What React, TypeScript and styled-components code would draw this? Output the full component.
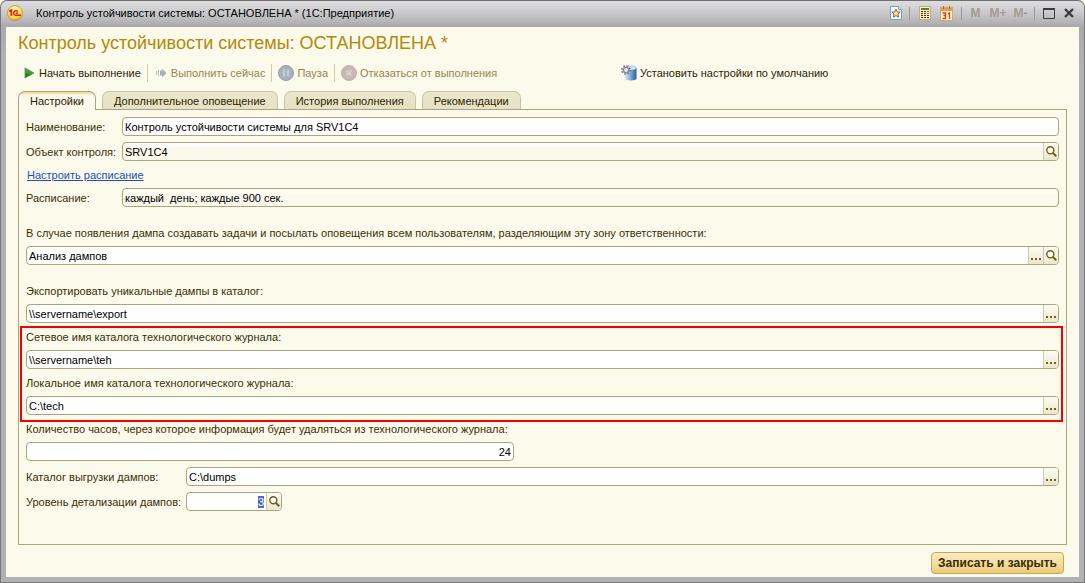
import React, { useEffect, useRef } from 'react';
import styled, { createGlobalStyle, css } from 'styled-components';

const Global = createGlobalStyle`
  *, *::before, *::after { box-sizing: border-box; }
  body { margin: 0; background: #fcfaeb; }
  body, button, input { font-family: "Liberation Sans", Arial, sans-serif; font-size: 11px; }
  button { margin: 0; padding: 0; border: 0; background: none; color: inherit; white-space: nowrap; }
`;

const Window = styled.div`
  display: flex;
  flex-direction: column;
  min-height: 100vh;
  padding: 0 5px 5px;
  border: 1px solid #77777b;
  border-top-color: #6e6e72;
  border-radius: 7px 7px 0 0;
  background: linear-gradient(#dededf 0, #c9c9cb 12px, #a9a9ad 26px, #b2b2b4 60px, #b2b2b4);
`;

const TitleBar = styled.header`
  display: flex;
  align-items: center;
  height: 26px;
  flex: none;
  padding: 0 0 2px 1px;
`;

const Caption = styled.div`
  flex: 1;
  margin-left: 13px;
  color: #000;
  white-space: nowrap;
`;

const TitleTools = styled.div`
  display: flex;
  align-items: center;
`;

const TitleButton = styled.button<{ $w: number; $muted?: boolean }>`
  display: flex;
  align-items: center;
  justify-content: center;
  width: ${(p) => p.$w}px;
  height: 18px;
  font-size: 12px;
  font-weight: bold;
  color: ${(p) => (p.$muted ? '#a39b95' : '#3c3c3e')};
`;

const TitleSeparator = styled.span`
  width: 1px;
  height: 13px;
  margin: 0 4px;
  background: #98989c;
`;

const Body = styled.main`
  display: flex;
  flex: 1;
  flex-direction: column;
  padding: 5px 12px 3px;
  background: #fcfaeb;
  color: #3a2f08;
`;

const Heading = styled.h1`
  margin: 0;
  font-size: 18px;
  font-weight: normal;
  line-height: 22px;
  color: #b08a0c;
  white-space: nowrap;
`;

const Toolbar = styled.div`
  display: flex;
  align-items: center;
  height: 22px;
  margin-top: 8px;
`;

const ToolGroup = styled.div`
  display: flex;
  align-items: center;
  flex: 0 0 597px;
`;

const ToolButton = styled.button<{ $gap?: number }>`
  display: flex;
  align-items: center;
  gap: ${(p) => p.$gap ?? 4}px;
  height: 20px;
  padding: 0 6px;
  color: #2c2304;
  &:disabled { color: #978552; }
`;

const ToolSeparator = styled.span`
  width: 1px;
  height: 18px;
  background: #cfcaa8;
`;

const Tabs = styled.div`
  display: flex;
  gap: 6px;
  height: 19px;
  margin-top: 7px;
`;

const Tab = styled.button<{ $active?: boolean }>`
  position: relative;
  height: 18px;
  padding: 0 11px;
  border: 1px solid #c9c4a0;
  border-bottom: 0;
  border-radius: 7px 7px 0 0;
  background: linear-gradient(#ebe7cc, #e6e1c3);
  color: #2c2304;
  ${(p) =>
    p.$active &&
    css`
      height: 19px;
      z-index: 1;
      border-color: #aaa57c;
      background: linear-gradient(#f3d588 0, #f9e9bd 2px, #fcfaeb 3px);
    `}
`;

const Panel = styled.section`
  display: flex;
  flex: 1;
  flex-direction: column;
  gap: 6px;
  margin-top: -1px;
  padding: 7px;
  border: 1px solid #aaa57c;
`;

const FormRow = styled.div<{ $label: number }>`
  display: grid;
  grid-template-columns: ${(p) => p.$label}px 1fr;
  align-items: center;
`;

const Stack = styled.div<{ $spaced?: boolean }>`
  display: flex;
  flex-direction: column;
  gap: 6px;
  margin-top: ${(p) => (p.$spaced ? 12 : 0)}px;
`;

const Highlight = styled.div`
  position: relative;
  display: flex;
  flex-direction: column;
  gap: 6px;
  &::after {
    content: '';
    position: absolute;
    inset: -3px -4px -7px -6px;
    border: 2px solid #f80000;
    pointer-events: none;
  }
`;

const Label = styled.label`
  padding-top: 2px;
  line-height: 13px;
  white-space: nowrap;
`;

const ScheduleLink = styled.a`
  align-self: flex-start;
  margin-left: 1px;
  padding-top: 2px;
  line-height: 13px;
  color: #1a4fc4;
`;

const Field = styled.div<{ $readOnly?: boolean; $width?: string }>`
  display: flex;
  width: ${(p) => p.$width ?? '100%'};
  height: 19px;
  overflow: hidden;
  border: 1px solid #aaa57c;
  border-radius: 4px;
  background: ${(p) => (p.$readOnly ? 'linear-gradient(#fff, #fbf9ec 6px)' : '#fff')};
`;

const Input = styled.input<{ $right?: boolean }>`
  flex: 1;
  min-width: 0;
  height: 17px;
  padding: 0 2px;
  border: 0;
  outline: 0;
  background: transparent;
  color: #000;
  text-align: ${(p) => (p.$right ? 'right' : 'left')};
  &::selection { background: #5168c4; color: #fff; }
`;

const FieldButton = styled.button`
  display: flex;
  align-items: center;
  justify-content: center;
  flex: none;
  width: 15px;
  border-left: 1px solid #cfcba9;
  background: linear-gradient(#fdfcf3, #ebe7cc);
`;

const Footer = styled.footer`
  display: flex;
  justify-content: flex-end;
  padding: 7px 3px 0;
`;

const SaveButton = styled.button`
  height: 22px;
  padding: 0 6px;
  border: 1px solid #c9a650;
  border-radius: 4px;
  background: linear-gradient(#fbedc4, #f4dc9c 55%, #ecca7c);
  color: #3a2c00;
  font-size: 12px;
  font-weight: bold;
`;

const LogoIcon = () => (
  <svg width="16" height="16" viewBox="0 0 16 16" aria-hidden="true">
    <defs>
      <radialGradient id="logo" cx="45%" cy="30%" r="70%">
        <stop offset="0" stopColor="#fffbc0" />
        <stop offset="0.7" stopColor="#fbe04e" />
        <stop offset="1" stopColor="#e0a322" />
      </radialGradient>
    </defs>
    <circle cx="8" cy="8" r="7.5" fill="url(#logo)" stroke="#c98d2a" strokeWidth="0.8" />
    <path d="M2.2 6.4 4.4 5.2V11" fill="none" stroke="#d8231a" strokeWidth="1.8" />
    <path d="M10.8 6.6A2.3 2.3 0 1 0 8.8 10.3H14M11 8.3H8.8" fill="none" stroke="#d8231a" strokeWidth="1.5" />
  </svg>
);

const StarIcon = () => (
  <svg width="12" height="14" viewBox="0 0 12 14" aria-hidden="true">
    <path d="M.5.5h8.2l2.8 2.8v10.2H.5z" fill="#f4f9fd" stroke="#7f9db4" />
    <path d="M8.5.5v3h3" fill="#cfe0ec" stroke="#7f9db4" />
    <path d="m6 3.2 1.2 2.6 2.9.3-2.1 2 .5 2.9L6 9.6 3.5 11l.5-2.9-2.1-2 2.9-.3z" fill="#f7df94" stroke="#6d5c2c" strokeWidth="0.9" />
  </svg>
);

const CalculatorIcon = () => (
  <svg width="12" height="14" viewBox="0 0 12 14" aria-hidden="true">
    <rect x="0.5" y="0.5" width="11" height="13" fill="#fbedc0" stroke="#cfa873" />
    <rect x="2" y="2" width="8" height="2" fill="#3f8a2a" />
    <path d="M2 5.5h8M2 7.5h8M2 9.5h8M2 11.5h8" stroke="#4d3311" strokeDasharray="2 1" />
    <path d="M8 5.500h2M8 7.500h2" stroke="#cc3e24" />
  </svg>
);

const CalendarIcon = () => (
  <svg width="13" height="15" viewBox="0 0 13 15" aria-hidden="true">
    <rect x="0.5" y="1.5" width="12" height="13" fill="#fdf3d2" stroke="#cfa873" />
    <path d="M1 2h11v3H1z" fill="#ee9a4e" />
    <path d="M3.5 0v3M9.5 0v3" stroke="#b5672c" />
    <path d="M2.5 7h3v5.5h-3M3.5 9.5h2M8 8l1.5-1v6" fill="none" stroke="#e03c12" strokeWidth="1.3" />
  </svg>
);

const MaximizeIcon = () => (
  <svg width="12" height="11" viewBox="0 0 12 11" aria-hidden="true">
    <path d="M.5 1v9.5h11V1" fill="none" stroke="#3c3c3e" />
    <path d="M0 1h12" stroke="#3c3c3e" strokeWidth="2" />
  </svg>
);

const CloseIcon = () => (
  <svg width="10" height="10" viewBox="0 0 10 10" aria-hidden="true">
    <path d="m1 1 8 8M9 1 1 9" stroke="#3c3c3e" strokeWidth="2.4" />
  </svg>
);

const PlayIcon = () => (
  <svg width="11" height="12" viewBox="0 0 11 12" aria-hidden="true">
    <path d="M1 1 10 6 1 11z" fill="#3da52f" stroke="#64806a" strokeWidth="0.8" />
    <path d="M1.5 6.5H8l-6.500 3.700z" fill="#228418" />
  </svg>
);

const RunNowIcon = () => (
  <svg width="13" height="10" viewBox="-2 0 13 10" aria-hidden="true">
    <path d="M.5 3v4M2.500 2v6" stroke="#b4bfc6" />
    <path d="M4 2.500h2V.6L10.500 5 6 9.400V7.500H4z" fill="#a3b2bf" />
  </svg>
);

const PauseIcon = () => (
  <svg width="16" height="16" viewBox="0 0 16 16" aria-hidden="true">
    <circle cx="8" cy="8" r="7.5" fill="#a5b1bc" stroke="#93a0ac" />
    <path d="M6 4.5v7M10 4.5v7" stroke="#c4cdd4" strokeWidth="2.2" />
  </svg>
);

const CancelIcon = () => (
  <svg width="16" height="16" viewBox="0 0 16 16" aria-hidden="true">
    <circle cx="8" cy="8" r="7.5" fill="#c9b8b3" stroke="#bfaeaa" />
    <path d="m5.5 5.5 5 5M10.5 5.5l-5 5" stroke="#dccfca" strokeWidth="2" />
  </svg>
);

const DatabaseGearIcon = () => (
  <svg width="16" height="16" viewBox="0 0 16 16" aria-hidden="true">
    <defs>
      <linearGradient id="drum">
        <stop offset="0" stopColor="#d8ebf6" />
        <stop offset="0.45" stopColor="#7fb2d6" />
        <stop offset="1" stopColor="#235f9c" />
      </linearGradient>
    </defs>
    <path d="M4 3v10.5c0 2.600 11.500 2.600 11.500 0V3z" fill="url(#drum)" />
    <ellipse cx="9.75" cy="3" rx="5.7" ry="2" fill="#d3e6f2" stroke="#7ba6c6" strokeWidth="0.6" />
    <circle cx="5" cy="5" r="4" fill="none" stroke="#777a8e" strokeWidth="1.8" strokeDasharray="1.6 1.54" />
    <circle cx="5" cy="5" r="2.6" fill="#e6e8ee" stroke="#8a8ca0" strokeWidth="1.4" />
  </svg>
);

const SearchIcon = () => (
  <svg width="11" height="11" viewBox="0 0 11 11" aria-hidden="true">
    <circle cx="4.3" cy="4.3" r="3.5" fill="#fffef6" stroke="#70601c" strokeWidth="1.4" />
    <path d="m7 7 3.2 3.2" stroke="#70601c" strokeWidth="2" />
  </svg>
);

const DotsIcon = () => (
  <svg width="10" height="11" viewBox="0 0 10 11" aria-hidden="true">
    <path d="M0 8h2v2H0zM4 8h2v2H4zM8 8h2v2H8z" fill="#70601c" />
  </svg>
);

const Choose = () => (
  <FieldButton type="button" aria-label="Выбрать">
    <DotsIcon />
  </FieldButton>
);

const Open = () => (
  <FieldButton type="button" aria-label="Открыть">
    <SearchIcon />
  </FieldButton>
);

export default function App() {
  const level = useRef<HTMLInputElement>(null);
  useEffect(() => {
    level.current?.focus();
    level.current?.select();
  }, []);

  return (
    <>
      <Global />
      <Window>
        <TitleBar>
          <LogoIcon />
          <Caption>Контроль устойчивости системы: ОСТАНОВЛЕНА * (1С:Предприятие)</Caption>
          <TitleTools>
            <TitleButton $w={18} aria-label="Избранное"><StarIcon /></TitleButton>
            <TitleSeparator />
            <TitleButton $w={22} aria-label="Калькулятор"><CalculatorIcon /></TitleButton>
            <TitleButton $w={21} aria-label="Календарь"><CalendarIcon /></TitleButton>
            <TitleSeparator />
            <TitleButton $w={19} $muted>M</TitleButton>
            <TitleButton $w={26} $muted>M+</TitleButton>
            <TitleButton $w={19} $muted>M-</TitleButton>
            <TitleSeparator />
            <TitleButton $w={20} aria-label="Развернуть"><MaximizeIcon /></TitleButton>
            <TitleButton $w={20} aria-label="Закрыть"><CloseIcon /></TitleButton>
          </TitleTools>
        </TitleBar>
        <Body>
          <Heading>Контроль устойчивости системы: ОСТАНОВЛЕНА *</Heading>
          <Toolbar>
            <ToolGroup>
              <ToolButton type="button"><PlayIcon />Начать выполнение</ToolButton>
              <ToolSeparator />
              <ToolButton type="button" disabled><RunNowIcon />Выполнить сейчас</ToolButton>
              <ToolSeparator />
              <ToolButton type="button" disabled $gap={3}><PauseIcon />Пауза</ToolButton>
              <ToolSeparator />
              <ToolButton type="button" disabled $gap={3}><CancelIcon />Отказаться от выполнения</ToolButton>
            </ToolGroup>
            <ToolButton type="button" $gap={3}><DatabaseGearIcon />Установить настройки по умолчанию</ToolButton>
          </Toolbar>
          <Tabs role="tablist">
            <Tab type="button" role="tab" aria-selected="true" $active>Настройки</Tab>
            <Tab type="button" role="tab">Дополнительное оповещение</Tab>
            <Tab type="button" role="tab">История выполнения</Tab>
            <Tab type="button" role="tab">Рекомендации</Tab>
          </Tabs>
          <Panel>
            <FormRow $label={96}>
              <Label htmlFor="name">Наименование:</Label>
              <Field><Input id="name" defaultValue="Контроль устойчивости системы для SRV1C4" /></Field>
            </FormRow>
            <FormRow $label={96}>
              <Label htmlFor="object">Объект контроля:</Label>
              <Field $readOnly><Input id="object" readOnly value="SRV1C4" /><Open /></Field>
            </FormRow>
            <ScheduleLink href="#schedule">Настроить расписание</ScheduleLink>
            <FormRow $label={96}>
              <Label htmlFor="schedule">Расписание:</Label>
              <Field $readOnly><Input id="schedule" readOnly value="каждый  день; каждые 900 сек." /></Field>
            </FormRow>
            <Stack $spaced>
              <Label htmlFor="zone">В случае появления дампа создавать задачи и посылать оповещения всем пользователям, разделяющим эту зону ответственности:</Label>
              <Field><Input id="zone" defaultValue="Анализ дампов" /><Choose /><Open /></Field>
            </Stack>
            <Stack $spaced>
              <Label htmlFor="export">Экспортировать уникальные дампы в каталог:</Label>
              <Field><Input id="export" defaultValue={'\\\\servername\\export'} /><Choose /></Field>
            </Stack>
            <Highlight>
              <Label htmlFor="network">Сетевое имя каталога технологического журнала:</Label>
              <Field><Input id="network" defaultValue={'\\\\servername\\teh'} /><Choose /></Field>
              <Label htmlFor="local">Локальное имя каталога технологического журнала:</Label>
              <Field><Input id="local" defaultValue={'C:\\tech'} /><Choose /></Field>
            </Highlight>
            <Stack>
              <Label htmlFor="hours">Количество часов, через которое информация будет удаляться из технологического журнала:</Label>
              <Field $width="488px"><Input id="hours" $right defaultValue="24" /></Field>
            </Stack>
            <FormRow $label={160}>
              <Label htmlFor="dumps">Каталог выгрузки дампов:</Label>
              <Field><Input id="dumps" defaultValue={'C:\\dumps'} /><Choose /></Field>
            </FormRow>
            <FormRow $label={160}>
              <Label htmlFor="level">Уровень детализации дампов:</Label>
              <Field $width="96px"><Input id="level" ref={level} $right defaultValue="3" /><Open /></Field>
            </FormRow>
          </Panel>
          <Footer>
            <SaveButton type="button">Записать и закрыть</SaveButton>
          </Footer>
        </Body>
      </Window>
    </>
  );
}
